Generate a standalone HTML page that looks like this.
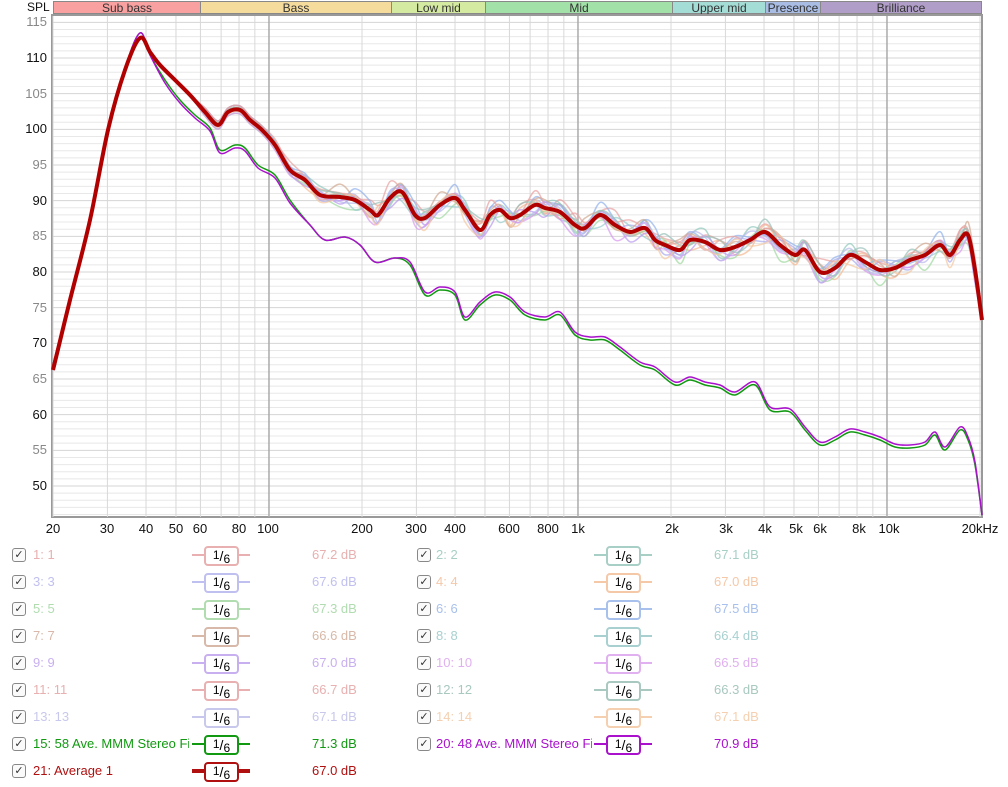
<!DOCTYPE html>
<html><head><meta charset="utf-8"><style>
body{margin:0;width:1008px;height:787px;background:#fff;font-family:"Liberation Sans",sans-serif;position:relative;overflow:hidden}
.ab{position:absolute}
.band{position:absolute;top:1px;height:13px;border:1px solid #888;box-sizing:border-box;font-size:12px;text-align:center;line-height:12px;color:#333}
.yl{position:absolute;left:0;width:47px;text-align:right;font-size:13px;color:#888}
.xl{position:absolute;top:521px;font-size:13px;color:#111;transform:translateX(-50%)}
.r{position:absolute;height:18px;font-size:13px;line-height:18px}
.cb{position:absolute;top:2px;width:12px;height:12px;border:1px solid #888;border-radius:3px;background:#fafafa;font-size:11px;line-height:12px;text-align:center;color:#333}
.lb{position:absolute;white-space:nowrap}
.fw{position:absolute;width:58px;height:18px}
.fw .ln{position:absolute;left:0;right:0;top:8px;height:2px}
.fw .bx{position:absolute;left:12px;width:31px;top:0;height:16px;border:2px solid;border-radius:4px;background:#fff;color:#000;font-size:12px;line-height:16px;text-align:center}
.bx i{font-style:normal;position:relative;top:-2px}
.bx b{font-weight:normal;position:relative;top:2px}
.bx u{text-decoration:none;font-size:14px}
.vl{position:absolute}
</style></head><body>
<div class="ab" style="left:27px;top:0;font-size:12px;color:#111">SPL</div>
<div class="band" style="left:53px;width:148px;background:#f9a0a0">Sub bass</div>
<div class="band" style="left:200px;width:192px;background:#f5dc9c">Bass</div>
<div class="band" style="left:391px;width:95px;background:#d4eaa0">Low mid</div>
<div class="band" style="left:485px;width:188px;background:#a2e2a8">Mid</div>
<div class="band" style="left:672px;width:94px;background:#a4dcd6">Upper mid</div>
<div class="band" style="left:765px;width:56px;background:#a8bce4">Presence</div>
<div class="band" style="left:820px;width:162px;background:#b09ec8">Brilliance</div>
<svg id="g" class="ab" style="left:0;top:0" width="1008" height="540"></svg>
<div class="yl" style="top:14px">115</div><div class="yl" style="top:50px;color:#111">110</div>
<div class="yl" style="top:86px">105</div><div class="yl" style="top:121px;color:#111">100</div>
<div class="yl" style="top:157px">95</div><div class="yl" style="top:193px;color:#111">90</div>
<div class="yl" style="top:228px">85</div><div class="yl" style="top:264px;color:#111">80</div>
<div class="yl" style="top:300px">75</div><div class="yl" style="top:335px;color:#111">70</div>
<div class="yl" style="top:371px">65</div><div class="yl" style="top:407px;color:#111">60</div>
<div class="yl" style="top:442px">55</div><div class="yl" style="top:478px;color:#111">50</div>
<div class="xl" style="left:53px">20</div><div class="xl" style="left:107px">30</div><div class="xl" style="left:146px">40</div><div class="xl" style="left:176px">50</div><div class="xl" style="left:200px">60</div><div class="xl" style="left:239px">80</div><div class="xl" style="left:268px">100</div><div class="xl" style="left:362px">200</div><div class="xl" style="left:416px">300</div><div class="xl" style="left:455px">400</div><div class="xl" style="left:509px">600</div><div class="xl" style="left:548px">800</div><div class="xl" style="left:578px">1k</div><div class="xl" style="left:672px">2k</div><div class="xl" style="left:726px">3k</div><div class="xl" style="left:765px">4k</div><div class="xl" style="left:796px">5k</div><div class="xl" style="left:820px">6k</div><div class="xl" style="left:859px">8k</div><div class="xl" style="left:889px">10k</div><div class="xl" style="left:980px">20kHz</div>

<div class="r" style="top:546px;left:0;width:1008px"><div class="cb" style="left:12px">✓</div><div class="lb" style="left:33px;color:#e8b0b0">1: 1</div><div class="fw" style="left:192px"><div class="ln" style="background:#e8b0b0"></div><div class="bx" style="border-color:#e8b0b0"><i>1</i><u>/</u><b>6</b></div></div><div class="vl" style="left:312px;color:#e8b0b0">67.2 dB</div><div class="cb" style="left:417px">✓</div><div class="lb" style="left:436px;color:#a8cfc6">2: 2</div><div class="fw" style="left:594px"><div class="ln" style="background:#a8cfc6"></div><div class="bx" style="border-color:#a8cfc6"><i>1</i><u>/</u><b>6</b></div></div><div class="vl" style="left:714px;color:#a8cfc6">67.1 dB</div></div>
<div class="r" style="top:573px;left:0;width:1008px"><div class="cb" style="left:12px">✓</div><div class="lb" style="left:33px;color:#c0c0f0">3: 3</div><div class="fw" style="left:192px"><div class="ln" style="background:#c0c0f0"></div><div class="bx" style="border-color:#c0c0f0"><i>1</i><u>/</u><b>6</b></div></div><div class="vl" style="left:312px;color:#c0c0f0">67.6 dB</div><div class="cb" style="left:417px">✓</div><div class="lb" style="left:436px;color:#f5c8a8">4: 4</div><div class="fw" style="left:594px"><div class="ln" style="background:#f5c8a8"></div><div class="bx" style="border-color:#f5c8a8"><i>1</i><u>/</u><b>6</b></div></div><div class="vl" style="left:714px;color:#f5c8a8">67.0 dB</div></div>
<div class="r" style="top:600px;left:0;width:1008px"><div class="cb" style="left:12px">✓</div><div class="lb" style="left:33px;color:#b0dcb0">5: 5</div><div class="fw" style="left:192px"><div class="ln" style="background:#b0dcb0"></div><div class="bx" style="border-color:#b0dcb0"><i>1</i><u>/</u><b>6</b></div></div><div class="vl" style="left:312px;color:#b0dcb0">67.3 dB</div><div class="cb" style="left:417px">✓</div><div class="lb" style="left:436px;color:#a8c0ec">6: 6</div><div class="fw" style="left:594px"><div class="ln" style="background:#a8c0ec"></div><div class="bx" style="border-color:#a8c0ec"><i>1</i><u>/</u><b>6</b></div></div><div class="vl" style="left:714px;color:#a8c0ec">67.5 dB</div></div>
<div class="r" style="top:627px;left:0;width:1008px"><div class="cb" style="left:12px">✓</div><div class="lb" style="left:33px;color:#d8b8a8">7: 7</div><div class="fw" style="left:192px"><div class="ln" style="background:#d8b8a8"></div><div class="bx" style="border-color:#d8b8a8"><i>1</i><u>/</u><b>6</b></div></div><div class="vl" style="left:312px;color:#d8b8a8">66.6 dB</div><div class="cb" style="left:417px">✓</div><div class="lb" style="left:436px;color:#a8d0d0">8: 8</div><div class="fw" style="left:594px"><div class="ln" style="background:#a8d0d0"></div><div class="bx" style="border-color:#a8d0d0"><i>1</i><u>/</u><b>6</b></div></div><div class="vl" style="left:714px;color:#a8d0d0">66.4 dB</div></div>
<div class="r" style="top:654px;left:0;width:1008px"><div class="cb" style="left:12px">✓</div><div class="lb" style="left:33px;color:#c8b0f0">9: 9</div><div class="fw" style="left:192px"><div class="ln" style="background:#c8b0f0"></div><div class="bx" style="border-color:#c8b0f0"><i>1</i><u>/</u><b>6</b></div></div><div class="vl" style="left:312px;color:#c8b0f0">67.0 dB</div><div class="cb" style="left:417px">✓</div><div class="lb" style="left:436px;color:#e0b0f0">10: 10</div><div class="fw" style="left:594px"><div class="ln" style="background:#e0b0f0"></div><div class="bx" style="border-color:#e0b0f0"><i>1</i><u>/</u><b>6</b></div></div><div class="vl" style="left:714px;color:#e0b0f0">66.5 dB</div></div>
<div class="r" style="top:681px;left:0;width:1008px"><div class="cb" style="left:12px">✓</div><div class="lb" style="left:33px;color:#e8b0b0">11: 11</div><div class="fw" style="left:192px"><div class="ln" style="background:#e8b0b0"></div><div class="bx" style="border-color:#e8b0b0"><i>1</i><u>/</u><b>6</b></div></div><div class="vl" style="left:312px;color:#e8b0b0">66.7 dB</div><div class="cb" style="left:417px">✓</div><div class="lb" style="left:436px;color:#a8c8c0">12: 12</div><div class="fw" style="left:594px"><div class="ln" style="background:#a8c8c0"></div><div class="bx" style="border-color:#a8c8c0"><i>1</i><u>/</u><b>6</b></div></div><div class="vl" style="left:714px;color:#a8c8c0">66.3 dB</div></div>
<div class="r" style="top:708px;left:0;width:1008px"><div class="cb" style="left:12px">✓</div><div class="lb" style="left:33px;color:#c8c8ec">13: 13</div><div class="fw" style="left:192px"><div class="ln" style="background:#c8c8ec"></div><div class="bx" style="border-color:#c8c8ec"><i>1</i><u>/</u><b>6</b></div></div><div class="vl" style="left:312px;color:#c8c8ec">67.1 dB</div><div class="cb" style="left:417px">✓</div><div class="lb" style="left:436px;color:#f5d0b0">14: 14</div><div class="fw" style="left:594px"><div class="ln" style="background:#f5d0b0"></div><div class="bx" style="border-color:#f5d0b0"><i>1</i><u>/</u><b>6</b></div></div><div class="vl" style="left:714px;color:#f5d0b0">67.1 dB</div></div>
<div class="r" style="top:735px;left:0;width:1008px"><div class="cb" style="left:12px">✓</div><div class="lb" style="left:33px;color:#119911;width:156px;overflow:hidden">15: 58 Ave. MMM Stereo Fi</div><div class="fw" style="left:192px"><div class="ln" style="background:#119911"></div><div class="bx" style="border-color:#119911"><i>1</i><u>/</u><b>6</b></div></div><div class="vl" style="left:312px;color:#119911">71.3 dB</div><div class="cb" style="left:417px">✓</div><div class="lb" style="left:436px;color:#aa11cc;width:156px;overflow:hidden">20: 48 Ave. MMM Stereo Fi</div><div class="fw" style="left:594px"><div class="ln" style="background:#aa11cc"></div><div class="bx" style="border-color:#aa11cc"><i>1</i><u>/</u><b>6</b></div></div><div class="vl" style="left:714px;color:#aa11cc">70.9 dB</div></div>
<div class="r" style="top:762px;left:0;width:1008px"><div class="cb" style="left:12px">✓</div><div class="lb" style="left:33px;color:#b01010">21: Average 1</div><div class="fw" style="left:192px"><div class="ln" style="background:#b01010;height:4px;top:7px"></div><div class="bx" style="border-color:#b01010"><i>1</i><u>/</u><b>6</b></div></div><div class="vl" style="left:312px;color:#b01010">67.0 dB</div></div>
<script>
var g=document.getElementById('g'),s='';
var X=function(f){return 53+309*Math.log10(f/20)};
s+='<rect x="52" y="15" width="930" height="502" fill="#fff" stroke="#999" stroke-width="2"/>';
for(var d=46;d<=116;d++){var y=58+(110-d)*7.133;if(y<16||y>516)continue;s+='<line x1="53" x2="981" y1="'+y+'" y2="'+y+'" stroke="'+(d%5==0?'#d4d4d4':'#e8e8e8')+'"/>';}
[20,30,40,50,60,70,80,90,100,200,300,400,500,600,700,800,900,1000,2000,3000,4000,5000,6000,7000,8000,9000,10000,20000].forEach(function(f){var x=X(f);var dk=(f==100||f==1000||f==10000);s+='<line x1="'+x+'" x2="'+x+'" y1="16" y2="517" stroke="'+(dk?'#aaa':'#d8d8d8')+'" stroke-width="'+(dk?1.5:1)+'"/>';});
var red=[[53,370],[70,300],[90,220],[108,130],[125,70],[140,38],[150,52],[160,65],[175,80],[190,95],[205,112],[218,125],[228,112],[240,110],[250,120],[262,130],[275,145],[290,170],[305,180],[320,195],[340,197],[355,200],[370,210],[378,215],[390,198],[402,192],[415,215],[425,218],[440,205],[455,198],[465,210],[480,230],[490,215],[500,210],[510,218],[520,215],[535,205],[545,208],[560,212],[575,225],[585,228],[600,215],[615,225],[630,232],[645,228],[655,240],[665,245],[680,250],[690,240],[705,242],[720,250],[735,247],[750,240],[765,232],[780,245],[795,255],[805,250],[820,272],[835,268],[850,255],[865,262],[880,270],[895,268],[910,260],[925,255],[940,245],[950,255],[960,240],[968,235],[975,270],[982,320]];
var low=[[53,365],[70,300],[90,220],[108,130],[125,68],[140,33],[150,55],[165,80],[180,100],[195,115],[210,128],[220,150],[235,145],[245,148],[258,165],[275,175],[290,200],[310,225],[325,240],[345,237],[360,245],[375,262],[395,258],[410,265],[425,295],[440,290],[455,295],[465,320],[480,305],[495,295],[510,300],[525,315],[545,320],[560,315],[575,335],[590,340],[605,340],[620,350],[640,365],[655,370],[675,385],[690,380],[705,385],[720,388],[735,395],[755,385],[770,410],[790,412],[805,430],[820,445],[835,440],[850,432],[865,435],[880,440],[895,447],[910,448],[925,445],[935,435],[945,450],[960,430],[968,440],[975,465],[982,515]];
function path(p){var d='M'+p[0][0]+','+p[0][1];for(var i=0;i<p.length-1;i++){var p0=p[i-1]||p[i],p1=p[i],p2=p[i+1],p3=p[i+2]||p2;d+=' C'+(p1[0]+(p2[0]-p0[0])/6).toFixed(1)+','+(p1[1]+(p2[1]-p0[1])/6).toFixed(1)+' '+(p2[0]-(p3[0]-p1[0])/6).toFixed(1)+','+(p2[1]-(p3[1]-p1[1])/6).toFixed(1)+' '+p2[0]+','+p2[1];}return d;}
function pl(p,c,w,o){return '<path d="'+path(p)+'" fill="none" stroke="'+c+'" stroke-width="'+w+'" stroke-opacity="'+o+'" stroke-linejoin="round"/>';}
function noisy(p,dy,n,seed){return p.map(function(q){var j=0,x=q[0];if(x>260&&x<978){var k=Math.min(1,(x-260)/80);j=k*(n*Math.sin(x*0.13+seed)+n*0.7*Math.cos(x*0.31+seed*2.3)+n*0.4*Math.sin(x*0.57+seed*3.1));}var off=(x>200&&x<978)?dy:0;return [x,q[1]+off+j];});}
var cols=['#e8a0a0','#90c8bc','#a8a8f0','#f5b890','#a0d8a0','#90b0ec','#d0a890','#98cccc','#b898f0','#d898f0','#e8a0a0','#98c0b8','#b8b8ec','#f5c8a0'];
cols.forEach(function(c,i){s+=pl(noisy(red,(i%5-2)*2,6,i*1.7),c,1.5,0.7);});
s+=pl(low,'#119911',1.5,1);
s+=pl(low.map(function(q){return [q[0],q[1]+(q[0]>150&&q[0]<300?3:(q[0]>400&&q[0]<978?-3:0))]}),'#aa11cc',1.5,1);
s+=pl(red,'#b00000',4,1);
g.innerHTML=s;
</script>
</body></html>
